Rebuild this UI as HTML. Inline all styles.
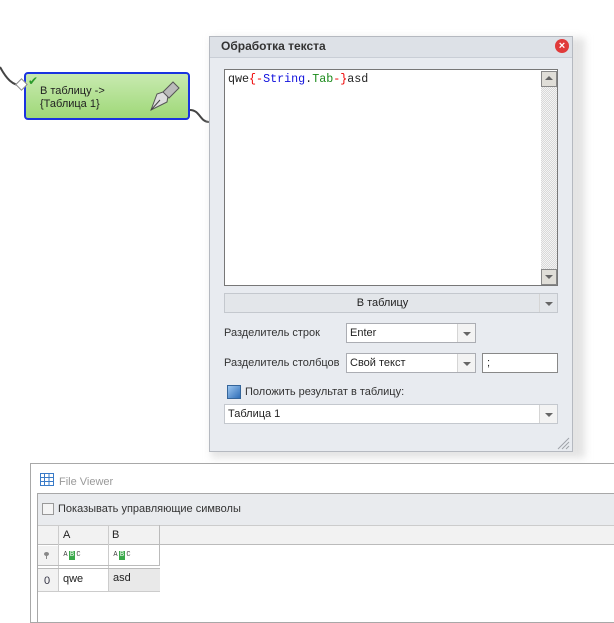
<!DOCTYPE html>
<html><head><meta charset="utf-8"><style>
body{margin:0;width:614px;height:617px;background:#fff;position:relative;overflow:hidden;font-family:"Liberation Sans","DejaVu Sans",sans-serif;font-size:11px;color:#222}
.a{position:absolute;box-sizing:border-box}
.combo{background:#fff;border:1px solid #abadb3;}
.arr{position:absolute;right:0;top:0;bottom:0;width:17px;border-left:1px solid #d5d5d5;background:#f3f3f3}
.arr:after{content:"";position:absolute;left:5px;top:8px;border-left:4px solid transparent;border-right:4px solid transparent;border-top:4px solid #666}
.mono{font-family:"Liberation Mono",monospace;font-size:11.7px}
.abc{position:absolute;display:flex;font-size:7px;font-family:'Liberation Mono',monospace;color:#444;line-height:9px;height:9px}
.abc span{width:5px;text-align:center;display:block}
.abc .g{background:#3aa84a;color:#fff;width:6px;margin:0 1px}
</style></head><body>
<svg class="a" style="left:0;top:0" width="614" height="617">
<path d="M0 67 C6 78,12 86,24 86" stroke="#444" stroke-width="2" fill="none"/>
<path d="M190 110 C200 110,200 122,209 122" stroke="#444" stroke-width="2" fill="none"/>
</svg>
<div class="a" style="left:24px;top:72px;width:166px;height:48px;border:2px solid #1a33e0;border-radius:4px;background:linear-gradient(#c8eab0,#9fd878)"></div>
<div class="a" style="left:17px;top:80px;width:9px;height:9px;background:#fff;border:1px solid #888;transform:rotate(45deg)"></div>
<div class="a" style="left:28px;top:74px;color:#2a9a2a;font-size:12px;font-weight:bold">✔</div>
<div class="a" style="left:40px;top:85px;font-size:11px;line-height:13px;color:#222">В таблицу -&gt;<br>{Таблица 1}</div>
<svg class="a" style="left:145px;top:80px" width="36" height="34"><path d="M6 30 L12 14 L24 10 L22 22 Z" fill="#ddd" stroke="#555"/><path d="M18 12 L28 2 L34 8 L24 18 Z" fill="#bbb" stroke="#555"/><path d="M6 30 L15 20" stroke="#444"/></svg>
<div class="a" style="left:211px;top:38px;width:374px;height:420px;background:#e4e4e4;filter:blur(4px)"></div>
<div class="a" style="left:209px;top:36px;width:364px;height:416px;background:#e8ebf0;border:1px solid #b5b9c0"></div>
<div class="a" style="left:210px;top:37px;width:362px;height:21px;background:#dde1e7;border-bottom:1px solid #c9ced6"></div>
<div class="a" style="left:221px;top:39px;font-weight:bold;font-size:12px;color:#333">Обработка текста</div>
<div class="a" style="left:555px;top:39px;width:14px;height:14px;border-radius:50%;background:#e03a3a;color:#fff;font-size:11px;line-height:14px;text-align:center;font-weight:bold">×</div>
<div class="a" style="left:224px;top:69px;width:334px;height:217px;background:#fff;border:1px solid #777"></div>
<div class="a mono" style="left:228px;top:72px"><span>qwe</span><span style="color:#e00">{-</span><span style="color:#11d">String</span>.<span style="color:#1a8a1a">Tab</span><span style="color:#e00">-}</span>asd</div>
<div class="a" style="left:541px;top:71px;width:16px;height:214px;background:repeating-conic-gradient(#d8d8d8 0 25%,#f4f4f4 0 50%) 0 0/2px 2px"></div>
<div class="a" style="left:541px;top:71px;width:16px;height:16px;background:#e0ded8;border:1px solid #888"></div>
<div class="a" style="left:545px;top:76px;border-left:4px solid transparent;border-right:4px solid transparent;border-bottom:4px solid #666"></div>
<div class="a" style="left:541px;top:269px;width:16px;height:16px;background:#e0ded8;border:1px solid #888"></div>
<div class="a" style="left:545px;top:275px;border-left:4px solid transparent;border-right:4px solid transparent;border-top:4px solid #666"></div>
<div class="a" style="left:224px;top:293px;width:334px;height:20px;background:#e3e6ea;border:1px solid #c4c8ce"><div style="text-align:center;line-height:18px;margin-right:17px">В таблицу</div><div class="arr" style="background:#e3e6ea"></div></div>
<div class="a" style="left:224px;top:327px;color:#333">Разделитель строк</div>
<div class="a combo" style="left:346px;top:323px;width:130px;height:20px"><div style="padding:3px 3px">Enter</div><div class="arr"></div></div>
<div class="a" style="left:224px;top:357px;color:#333">Разделитель столбцов</div>
<div class="a combo" style="left:346px;top:353px;width:130px;height:20px"><div style="padding:3px 3px">Свой текст</div><div class="arr"></div></div>
<div class="a combo" style="left:482px;top:353px;width:76px;height:20px;border-color:#888"><div style="padding:3px 4px">;</div></div>
<div class="a" style="left:227px;top:385px;width:14px;height:14px;background:linear-gradient(135deg,#9cc6f0,#2f6eb8);border:1px solid #35659a"></div>
<div class="a" style="left:245px;top:386px;color:#333">Положить результат в таблицу:</div>
<div class="a combo" style="left:224px;top:404px;width:334px;height:20px;border-color:#c4c8ce"><div style="padding:3px 3px">Таблица 1</div><div class="arr"></div></div>
<svg class="a" style="left:556px;top:436px" width="14" height="14"><path d="M2 13 L13 2 M6 13 L13 6 M10 13 L13 10" stroke="#a0a4aa"/></svg>
<div class="a" style="left:30px;top:463px;width:600px;height:160px;border:1px solid #a8a8a8;background:#fff"></div>
<svg class="a" style="left:40px;top:473px" width="14" height="13"><rect x="0.5" y="0.5" width="13" height="12" fill="#fff" stroke="#3a7bc8"/><path d="M0 4.5H14M0 8.5H14M4.5 0V13M9 0V13" stroke="#3a7bc8"/></svg>
<div class="a" style="left:59px;top:476px;color:#999">File Viewer</div>
<div class="a" style="left:37px;top:493px;width:580px;height:130px;border:1px solid #a8a8a8;background:#fff"></div>
<div class="a" style="left:38px;top:494px;width:580px;height:31px;background:#e9ebee"></div>
<div class="a" style="left:42px;top:503px;width:12px;height:12px;border:1px solid #999;background:#f4f4f4"></div>
<div class="a" style="left:58px;top:503px;color:#333">Показывать управляющие символы</div>
<div class="a" style="left:38px;top:525px;width:580px;height:20px;background:#f2f2f2;border-bottom:1px solid #bbb;border-top:1px solid #ccc"></div>
<div class="a" style="left:58px;top:525px;width:1px;height:66px;background:#ccc"></div>
<div class="a" style="left:108px;top:525px;width:1px;height:66px;background:#ccc"></div>
<div class="a" style="left:159px;top:525px;width:1px;height:41px;background:#bbb"></div>
<div class="a" style="left:63px;top:529px">A</div>
<div class="a" style="left:112px;top:529px">B</div>
<div class="a" style="left:38px;top:546px;width:20px;height:20px;background:#f2f2f2"></div>
<div class="a" style="left:44px;top:552px;width:5px;height:4px;border-radius:50%;background:#888"></div>
<div class="a" style="left:46px;top:555px;width:1px;height:4px;background:#888"></div>
<div class="a" style="left:38px;top:565px;width:122px;height:1px;background:#bbb"></div>
<div class="a" style="left:38px;top:568px;width:122px;height:1px;background:#bbb"></div>
<div class="abc" style="left:63px;top:551px"><span>A</span><span class="g">B</span><span>C</span></div>
<div class="abc" style="left:113px;top:551px"><span>A</span><span class="g">B</span><span>C</span></div>
<div class="a" style="left:38px;top:569px;width:20px;height:22px;background:#f2f2f2"></div>
<div class="a" style="left:109px;top:569px;width:51px;height:22px;background:#e9e9e9"></div>
<div class="a" style="left:38px;top:591px;width:122px;height:1px;background:#ccc"></div>
<div class="a" style="left:44px;top:575px;color:#334">0</div>
<div class="a" style="left:63px;top:573px">qwe</div>
<div class="a" style="left:113px;top:572px">asd</div>
</body></html>
